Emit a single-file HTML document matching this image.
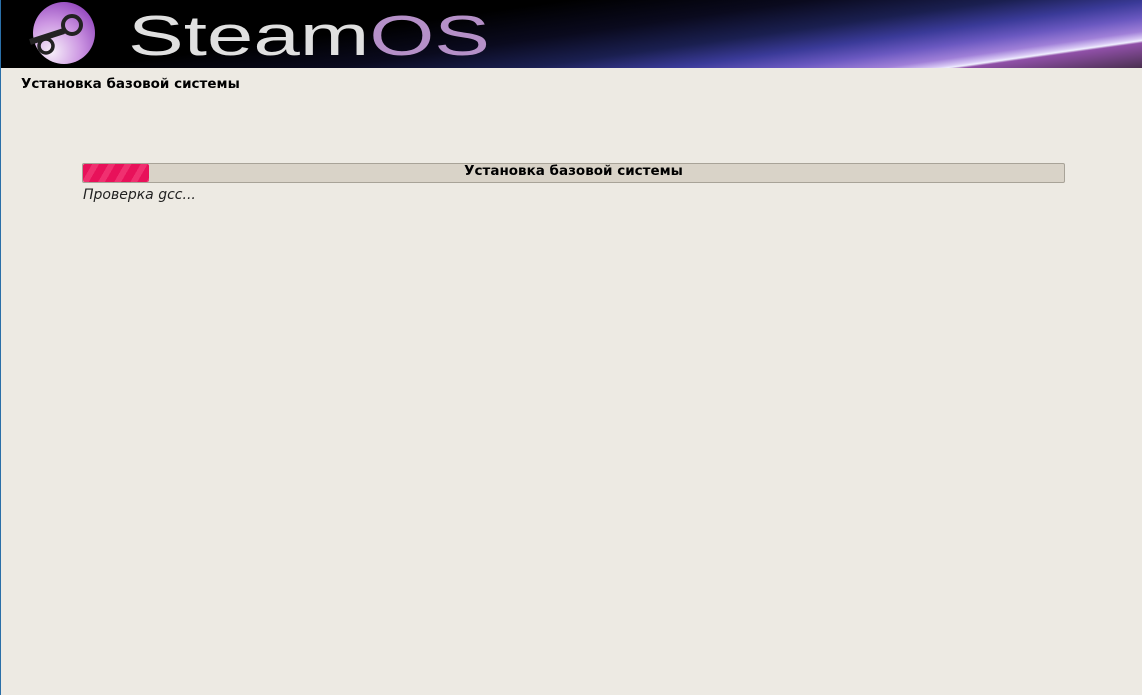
<!DOCTYPE html>
<html><head><meta charset="utf-8"><style>
body{margin:0;width:1142px;height:695px;background:#edeae3;position:relative;overflow:hidden;font-family:"DejaVu Sans","Liberation Sans",sans-serif}
#hdr{position:absolute;left:0;top:0;width:1142px;height:68px;background:linear-gradient(172deg,#000 0%,#000 35%,#0a0a1e 50%,#1a1f50 62%,#3a3a98 71%,#6a58c0 78%,#a080d8 84%,#d8c8f4 87%,#f0f0ff 88%,#9050a8 89%,#4a3050 100%)}
#lb{position:absolute;left:0;top:0;width:1px;height:695px;background:#2a6fa8}
.t{position:absolute;font-size:13.5px;color:#000;font-weight:bold;white-space:nowrap}
</style></head><body>
<div id="hdr">
<svg width="1142" height="68" style="position:absolute;left:0;top:0">
<defs><radialGradient id="g" cx="0.3" cy="0.8" r="0.95"><stop offset="0" stop-color="#f6eef9"/><stop offset="0.5" stop-color="#cc96e2"/><stop offset="1" stop-color="#8a3ab8"/></radialGradient></defs>
<circle cx="64" cy="33" r="31" fill="url(#g)"/>
<circle cx="72" cy="25" r="9" fill="none" stroke="#222" stroke-width="4"/>
<line x1="64" y1="31" x2="30" y2="42" stroke="#222" stroke-width="6"/>
<circle cx="46" cy="46" r="7" fill="none" stroke="#222" stroke-width="3.5"/>
<text x="128" y="55" font-family="Liberation Sans,sans-serif" font-size="57" fill="#e0e0e0" textLength="362" lengthAdjust="spacingAndGlyphs">Steam<tspan fill="#b590c8">OS</tspan></text>
</svg>
</div>
<div id="lb"></div>
<div class="t" style="left:21px;top:76px">Установка базовой системы</div>
<div style="position:absolute;left:82px;top:163px;width:981px;height:18px;background:#d9d3c8;border:1px solid #a8a398;border-radius:2px"></div>
<div style="position:absolute;left:83px;top:164px;width:66px;height:18px;background:repeating-linear-gradient(120deg,#e8115a 0 8px,#f03070 8px 14px);border-radius:2px"></div>
<div class="t" style="left:82px;width:983px;text-align:center;top:163px">Установка базовой системы</div>
<div style="position:absolute;left:83px;top:187px;font-size:14px;font-style:italic;color:#222">Проверка gcc...</div>
</body></html>
